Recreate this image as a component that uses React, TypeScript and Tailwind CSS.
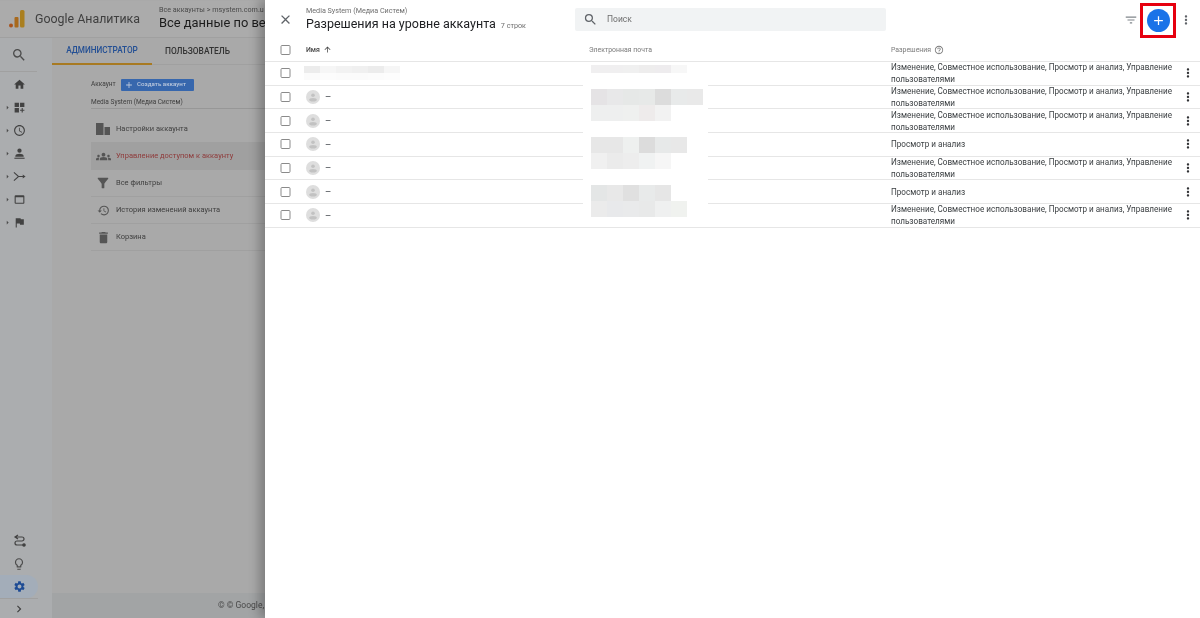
import React from 'react';
import {
  MdSearch, MdHome, MdDashboardCustomize, MdAccessTime, MdWebAsset, MdFlag, MdSettings,
  MdLightbulbOutline, MdChevronRight, MdArrowRight, MdClose, MdFilterList, MdMoreVert, MdAdd,
  MdArrowUpward, MdHelpOutline, MdHistory, MdDelete, MdGroups, MdFilterAlt,
} from 'react-icons/md';

const font = "font-['Roboto','Noto_Sans',sans-serif]";

const UserLine = ({ size = 14, className = '' }: { size?: number; className?: string }) => (
  <svg width={size} height={size} viewBox="0 0 14 14" fill="currentColor" className={className}>
    <circle cx="7" cy="4" r="2.300" />
    <path d="M2.500 10c0-1.800 2.500-2.600 4.500-2.600s4.500.8 4.500 2.600v.500h-9z" />
    <rect x="1.500" y="11.500" width="11" height="1.200" />
  </svg>
);

const FlowIcon = ({ size = 14, className = '' }: { size?: number; className?: string }) => (
  <svg width={size} height={size} viewBox="0 0 14 14" fill="none" stroke="currentColor" strokeWidth="1.200" className={className}>
    <path d="M1 2.500 6 7l-5 4.500M6 7h5.500" />
    <path d="M10.500 4.800 13.500 7l-3 2.200z" fill="currentColor" stroke="none" />
  </svg>
);

const BuildingIcon = ({ size = 14, className = '' }: { size?: number; className?: string }) => (
  <svg width={size} height={size} viewBox="0 0 14 14" fill="currentColor" className={className}>
    <rect x="0" y="1" width="7.500" height="12" />
    <rect x="8.500" y="5" width="5.500" height="8" />
  </svg>
);

const navIcons = [MdDashboardCustomize, MdAccessTime, UserLine, FlowIcon, MdWebAsset, MdFlag];

const adminItems = [
  { label: 'Настройки аккаунта', icon: BuildingIcon, size: 14, active: false },
  { label: 'Управление доступом к аккаунту', icon: MdGroups, size: 15, active: true },
  { label: 'Все фильтры', icon: MdFilterAlt, size: 16, active: false },
  { label: 'История изменений аккаунта', icon: MdHistory, size: 13, active: false },
  { label: 'Корзина', icon: MdDelete, size: 15, active: false },
];

const fullAccess = 'Изменение, Совместное использование, Просмотр и анализ, Управление пользователями';
const viewOnly = 'Просмотр и анализ';

const rows = [fullAccess, fullAccess, fullAccess, viewOnly, fullAccess, viewOnly, fullAccess];

// пиксельная замазка почты, ячейки 16x16
const blurBlocks = [
  { top: 'mt-[3px]', h: 'h-[8px]', cells: ['bg-[#f0eff0]', 'bg-[#f0eff0]', 'bg-[#f0f0f0]', 'bg-[#eeeded]', 'bg-[#eeecee]', 'bg-[#f7f7f7]'] },
  { top: 'mt-[16px]', h: 'h-[16px]', cells: ['bg-[#e5e3e5]', 'bg-[#e8e8e9]', 'bg-[#e6e8e7]', 'bg-[#e7e9e8]', 'bg-[#dcdcdc]', 'bg-[#e8eaea]', 'bg-[#e9e9e9]'] },
  { top: 'mt-0', h: 'h-[16px]', cells: ['bg-[#eeefef]', 'bg-[#eeefef]', 'bg-[#eff0ef]', 'bg-[#eeebeb]', 'bg-[#f2f2f2]'] },
  { top: 'mt-[16px]', h: 'h-[16px]', cells: ['bg-[#e7e7e7]', 'bg-[#e7e7e7]', 'bg-[#eef0ef]', 'bg-[#dcdcdc]', 'bg-[#e7e9e9]', 'bg-[#e8e8e8]'] },
  { top: 'mt-0', h: 'h-[16px]', cells: ['bg-[#f0f0f0]', 'bg-[#ebebeb]', 'bg-[#ededed]', 'bg-[#f0f2f2]', 'bg-[#f6f6f6]'] },
  { top: 'mt-[16px]', h: 'h-[16px]', cells: ['bg-[#e4e6e6]', 'bg-[#e8e8e8]', 'bg-[#e0e0e0]', 'bg-[#e8eaea]', 'bg-[#e6e6e6]'] },
  { top: 'mt-0', h: 'h-[16px]', cells: ['bg-[#ebebeb]', 'bg-[#e8e9eb]', 'bg-[#e9eaeb]', 'bg-[#e8e9e9]', 'bg-[#eff0f0]', 'bg-[#f0f2ef]'] },
];

const nameBlur = ['bg-[#ececec]', 'bg-[#f6f6f6]', 'bg-[#f2f2f2]', 'bg-[#f0f0f0]', 'bg-[#ececec]', 'bg-[#f6f6f6]'];
const nameBlurFaint = ['bg-[#fbfbfb]', 'bg-[#fcfcfc]', 'bg-[#fbfbfb]', 'bg-[#fbfbfb]', 'bg-[#fcfcfc]', 'bg-[#fdfdfd]'];

const Checkbox = () => (
  <div className="w-[10px] h-[10px] rounded-[1.5px] border border-[#8a8a8a] shrink-0 -translate-x-[0.5px]" />
);

const Avatar = () => (
  <div className="w-[14px] h-[14px] rounded-full bg-[#dedede] shrink-0">
    <svg width="14" height="14" viewBox="0 0 14 14" fill="#c2c2c2">
      <circle cx="7" cy="5.200" r="1.800" />
      <ellipse cx="7" cy="9.800" rx="3.800" ry="1.800" />
    </svg>
  </div>
);

const AdminPanel = () => (
  <div className={`w-[265px] h-full shrink-0 flex flex-col bg-[#a9a9a9] overflow-hidden ${font}`}>
    <header className="h-[37px] mt-px flex items-center shrink-0 bg-[#ababab] border-b border-[#a0a0a0]">
      <svg width="16" height="18" viewBox="0 0 16 18" className="ml-[9px] shrink-0">
        <circle cx="2" cy="15.500" r="2" fill="#a8531c" />
        <rect x="5.500" y="7" width="4" height="10.500" rx="1" fill="#a8691c" />
        <rect x="11" y="0" width="4.500" height="17.500" rx="1.500" fill="#aa7f1f" />
      </svg>
      <span className="ml-[10px] w-[105px] text-[12.400px] text-[#3f3f3f] whitespace-nowrap">Google Аналитика</span>
      <div className="ml-[9px] w-px h-[18px] bg-[#9a9a9a]" />
      <div className="ml-[10px] whitespace-nowrap -mt-[2px]">
        <div className="text-[7.200px] leading-[10px] text-[#4a4a4a]">Все аккаунты &gt; msystem.com.u</div>
        <div className="text-[12.900px] leading-[16px] text-[#1c1c1c]">Все данные по ве</div>
      </div>
    </header>
    <div className="flex flex-1 min-h-0">
      <aside className="w-[52px] shrink-0 flex flex-col bg-[#abadaf]">
        <div className="h-[34px] w-[37px] flex items-center justify-center border-b border-[#a0a0a0] pl-px">
          <MdSearch size={16} className="text-[#4b4b4b]" />
        </div>
        <div className="w-[38px] h-[23px] mt-[1px] flex items-center justify-center">
          <MdHome size={13} className="text-[#3f3f3f]" />
        </div>
        {navIcons.map((Icon, i) => (
          <div key={i} className="w-[38px] h-[23px] flex items-center justify-center relative">
            <MdArrowRight size={9} className="text-[#4b4b4b] absolute left-[3px] top-[7px]" />
            <Icon size={13} className="text-[#424242]" />
          </div>
        ))}
        <div className="mt-auto w-[38px] h-[23px] flex items-center justify-center">
          <svg width="13" height="13" viewBox="0 0 13 13" fill="none" stroke="#424242" strokeWidth="1.200">
            <path d="M5 1 2 3l3 2M2 3h7a2 2 0 0 1 0 4H4a2 2 0 0 0 0 4h6" />
            <circle cx="11" cy="11" r="1.200" fill="#424242" />
          </svg>
        </div>
        <div className="w-[38px] h-[23px] flex items-center justify-center">
          <MdLightbulbOutline size={14} className="text-[#4b4b4b]" />
        </div>
        <div className="w-[38px] h-[23px] flex items-center justify-center bg-[#a3adb9] rounded-r-full pl-px">
          <MdSettings size={13} className="text-[#1c4a94]" />
        </div>
        <div className="h-[20px] w-[38px] flex items-center justify-center border-t border-[#a0a0a0]">
          <MdChevronRight size={14} className="text-[#3f3f3f]" />
        </div>
      </aside>
      <main className="flex-1 min-w-0 flex flex-col bg-[#a9a9a9]">
        <div className="h-[27px] flex items-stretch border-b border-[#a0a0a0] text-[8.200px] font-medium shrink-0">
          <div className="w-[100px] flex items-center justify-center text-[#234f94] border-b-2 border-[#a87a22] -mb-px">АДМИНИСТРАТОР</div>
          <div className="ml-[13px] flex items-center text-[#333333] text-[8.400px]">ПОЛЬЗОВАТЕЛЬ</div>
        </div>
        <div className="flex-1 pl-[39px] pt-[14px] whitespace-nowrap">
          <div className="flex items-center h-[12px]">
            <span className="text-[6.500px] text-[#3d3d3d] w-[30px]">Аккаунт</span>
            <div className="w-[73px] h-[12px] flex items-center bg-[#3767ad] rounded-[1px] text-[#bcc9dd] text-[6.200px] font-medium">
              <MdAdd size={10} className="ml-[3px] mr-[3px]" />
              Создать аккаунт
            </div>
          </div>
          <div className="mt-[5px] h-[13px] text-[6.500px] text-[#3d3d3d] border-b border-[#979797] leading-[12px]">Media System (Медиа Систем)</div>
          <div className="mt-[7px]">
            {adminItems.map((item) => (
              <div
                key={item.label}
                className={`h-[27px] flex items-center pl-[1px] border-b border-[#a0a0a0] text-[7.500px] ${item.active ? 'bg-[#a0a0a0] text-[#8f3b3b]' : 'text-[#3f3f3f]'}`}
              >
                <div className="w-[22px] mr-[2px] flex justify-center">
                  <item.icon size={item.size} className="text-[#555555]" />
                </div>
                {item.label}
              </div>
            ))}
          </div>
        </div>
        <div className="h-[25px] shrink-0 bg-[#a2a4a5] flex items-center pl-[166px] text-[8.500px] text-[#4a4a4a] whitespace-nowrap">
          © © Google,
        </div>
      </main>
    </div>
  </div>
);

const PermissionsPanel = () => (
  <section className={`flex-1 min-w-0 h-full bg-white flex flex-col relative shadow-[-6px_0_10px_rgba(0,0,0,0.25)] ${font}`}>
    <div className="h-[39px] shrink-0 flex items-center">
      <div className="w-[41px] flex justify-center">
        <MdClose size={15} className="text-[#5f6368]" />
      </div>
      <div className="whitespace-nowrap w-[269px]">
        <div className="text-[7.200px] leading-[10px] text-[#6e6e6e]">Media System (Медиа Систем)</div>
        <div className="flex items-baseline leading-[16px]">
          <span className="text-[12.500px] text-[#202124]">Разрешения на уровне аккаунта</span>
          <span className="ml-[5px] text-[7.200px] text-[#6e6e6e]">7 строк</span>
        </div>
      </div>
      <div className="w-[311px] h-[23px] flex items-center bg-[#f1f3f4] rounded-[2px] text-[8.500px] text-[#6e6e6e]">
        <MdSearch size={15} className="ml-[8px] text-[#5f6368]" />
        <span className="ml-[9px]">Поиск</span>
      </div>
      <div className="ml-auto flex items-center">
        <MdFilterList size={14} className="text-[#80868b]" />
        <div className="ml-[2px] mt-[1px] w-[36px] h-[35px] border-[3px] border-[#e6000f] flex items-center justify-center">
          <div className="w-[23px] h-[23px] rounded-full bg-[#1a73e8] flex items-center justify-center">
            <MdAdd size={15} className="text-white" />
          </div>
        </div>
        <MdMoreVert size={14} className="ml-[3px] mr-[7px] text-[#5f6368]" />
      </div>
    </div>
    <div className="h-[23px] shrink-0 flex items-center border-b border-[#e6e6e6] text-[6.900px] text-[#7a7a7a]">
      <div className="w-[41px] flex justify-center"><Checkbox /></div>
      <div className="w-[283px] flex items-center text-[#444444] font-medium">
        Имя
        <MdArrowUpward size={9} className="ml-[3px] text-[#444444]" />
      </div>
      <div className="w-[302px]">Электронная почта</div>
      <div className="flex items-center">
        Разрешения
        <MdHelpOutline size={10} className="ml-[3px] text-[#7a7a7a]" />
      </div>
    </div>
    {rows.map((perm, i) => (
      <div key={i} className="h-[23.700px] shrink-0 flex items-center border-b border-[#e6e6e6]">
        <div className="w-[41px] flex justify-center"><Checkbox /></div>
        <div className="w-[585px] flex items-center gap-[5px]">
          {i === 0 ? (
            <div className="flex flex-col -ml-[2px] pb-px">
              <div className="flex">
                {nameBlur.map((c, j) => <div key={j} className={`w-[16px] h-[7px] ${c}`} />)}
              </div>
              <div className="flex">
                {nameBlurFaint.map((c, j) => <div key={j} className={`w-[16px] h-[7px] ${c}`} />)}
              </div>
            </div>
          ) : (
            <>
              <Avatar />
              <span className="text-[9.500px] text-[#5f6368] font-medium pt-px">–</span>
            </>
          )}
        </div>
        <div className="w-[282px] text-[8.150px] leading-[12px] text-[#3c4043]">{perm}</div>
        <div className="flex-1 flex justify-center pl-[3px]">
          <MdMoreVert size={14} className="text-[#303134]" />
        </div>
      </div>
    ))}
    {/* замазка поверх строк таблицы */}
    <div className="absolute left-[318px] top-[62px] w-[125px] h-[161px] bg-white pl-[8px]">
      {blurBlocks.map((b, i) => (
        <div key={i} className={`flex ${b.top} ${b.h}`}>
          {b.cells.map((c, j) => <div key={j} className={`w-[16px] h-full ${c}`} />)}
        </div>
      ))}
    </div>
  </section>
);

export default function App() {
  return (
    <div className="w-[1200px] h-[618px] flex overflow-hidden bg-white blur-[0.3px]">
      <AdminPanel />
      <PermissionsPanel />
    </div>
  );
}
